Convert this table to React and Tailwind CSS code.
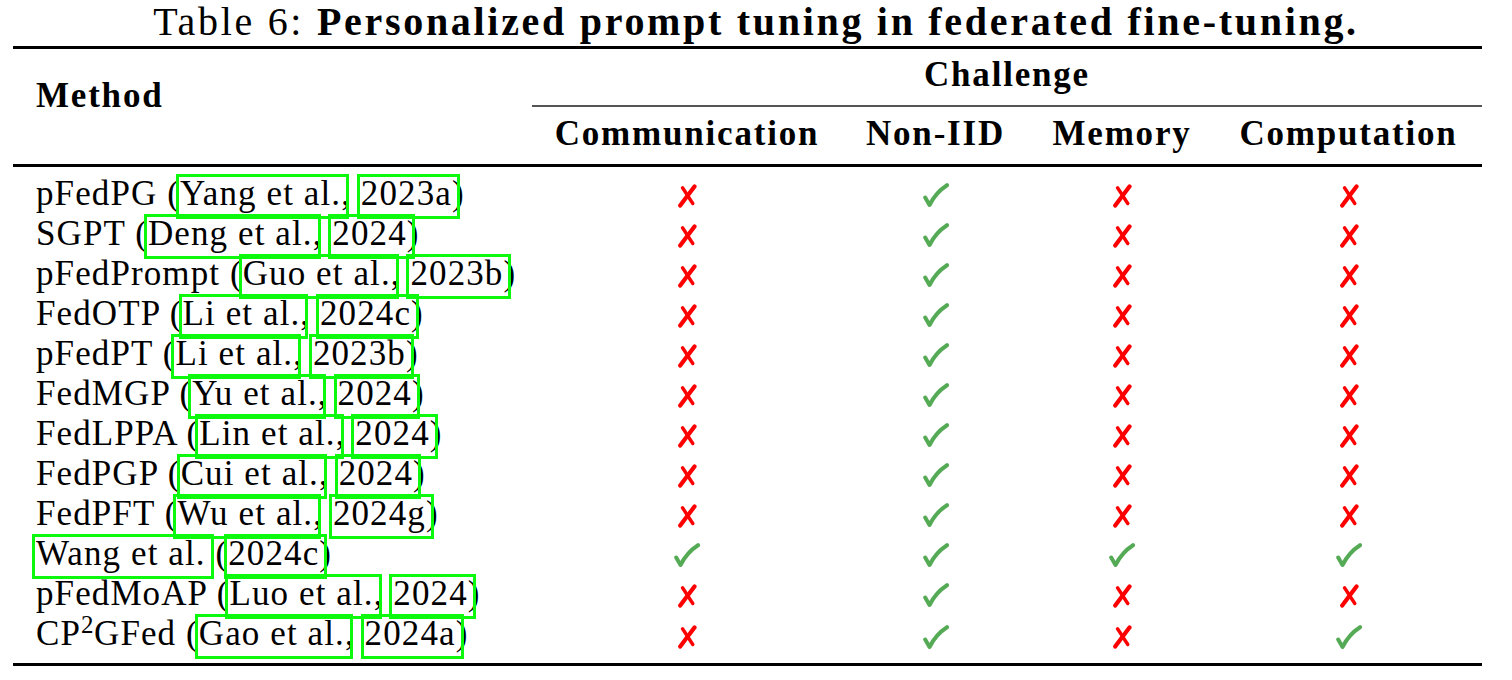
import React from "react";

const Cross = () => (
  <svg width="20" height="24" viewBox="0 0 20 24" className="block">
    <path d="M17.5 2.5 C 13 8.5, 8 15, 3.2 21.5" stroke="#ff0000" strokeWidth="4.2" fill="none" strokeLinecap="round" />
    <path d="M5.5 3.8 C 9 9, 12.5 14.5, 15.8 19.5" stroke="#ff0000" strokeWidth="3.4" fill="none" strokeLinecap="round" />
  </svg>
);

const Check = () => (
  <svg width="26" height="25" viewBox="0 0 26 25" className="block">
    <path d="M2.2 14.5 L 6.5 22 C 10.5 14, 16.5 7, 24 2.2" stroke="#55aa55" strokeWidth="4" fill="none" strokeLinecap="round" strokeLinejoin="round" />
  </svg>
);

const Cite = ({ children }) => (
  <span className="relative inline-block">
    {children}
    <span className="pointer-events-none absolute left-[-4px] right-[-8px] top-0 h-[45px] border-[3px] border-[#0cf80c]" />
  </span>
);

const rows = [
  { m: <>pFedPG (<Cite>Yang et al.</Cite>, <Cite>2023a</Cite>)</>, c: [0, 1, 0, 0] },
  { m: <>SGPT (<Cite>Deng et al.</Cite>, <Cite>2024</Cite>)</>, c: [0, 1, 0, 0] },
  { m: <>pFedPrompt (<Cite>Guo et al.</Cite>, <Cite>2023b</Cite>)</>, c: [0, 1, 0, 0] },
  { m: <>FedOTP (<Cite>Li et al.</Cite>, <Cite>2024c</Cite>)</>, c: [0, 1, 0, 0] },
  { m: <>pFedPT (<Cite>Li et al.</Cite>, <Cite>2023b</Cite>)</>, c: [0, 1, 0, 0] },
  { m: <>FedMGP (<Cite>Yu et al.</Cite>, <Cite>2024</Cite>)</>, c: [0, 1, 0, 0] },
  { m: <>FedLPPA (<Cite>Lin et al.</Cite>, <Cite>2024</Cite>)</>, c: [0, 1, 0, 0] },
  { m: <>FedPGP (<Cite>Cui et al.</Cite>, <Cite>2024</Cite>)</>, c: [0, 1, 0, 0] },
  { m: <>FedPFT (<Cite>Wu et al.</Cite>, <Cite>2024g</Cite>)</>, c: [0, 1, 0, 0] },
  { m: <><Cite>Wang et al.</Cite> (<Cite>2024c</Cite>)</>, c: [1, 1, 1, 1] },
  { m: <>pFedMoAP (<Cite>Luo et al.</Cite>, <Cite>2024</Cite>)</>, c: [0, 1, 0, 0] },
  {
    m: (
      <>
        CP<span className="relative top-[-12px] text-[25px] tracking-[0.5px]">2</span>GFed (<Cite>Gao et al.</Cite>, <Cite>2024a</Cite>)
      </>
    ),
    c: [0, 1, 0, 1],
  },
];

export default function App() {
  return (
    <div className="w-[1512px] h-[680px] overflow-hidden bg-white text-black font-[family-name:Liberation_Serif,serif]">
      <div className="h-[44px] text-center text-[40px] leading-[44px] tracking-[2.7px] whitespace-nowrap">
        Table 6: <span className="font-bold">Personalized prompt tuning in federated fine-tuning.</span>
      </div>
      <div className="ml-[13px] w-[1469px]">
        <div className="mt-[2px] h-[3px] bg-black" />
        {/* header */}
        <div className="grid grid-cols-[519px_950px] font-bold text-[35px] leading-[40px] tracking-[1.8px]">
          <div className="pl-[23px] pt-[27px]">Method</div>
          <div className="pt-[6px] pb-[10px]">
            <div className="text-center">Challenge</div>
            <div className="mt-[10px] h-[1.5px] bg-[#555]" />
            <div className="mt-[7px] grid grid-cols-[310px_187px_186px_267px] text-center whitespace-nowrap">
              <div>Communication</div>
              <div>Non-IID</div>
              <div>Memory</div>
              <div>Computation</div>
            </div>
          </div>
        </div>
        <div className="h-[3px] bg-black" />
        {/* body */}
        <div className="pt-[7px] pb-[9px]">
          {rows.map((r, i) => (
            <div key={i} className="grid h-[40px] grid-cols-[519px_310px_187px_186px_267px]">
              <div className="pl-[23px] text-[35px] leading-[40px] tracking-[1.1px] whitespace-nowrap">{r.m}</div>
              {r.c.map((v, j) => (
                <div key={j} className="flex items-center justify-center pt-[4px]">
                  {v ? <Check /> : <Cross />}
                </div>
              ))}
            </div>
          ))}
        </div>
        <div className="h-[3px] bg-black" />
      </div>
    </div>
  );
}
